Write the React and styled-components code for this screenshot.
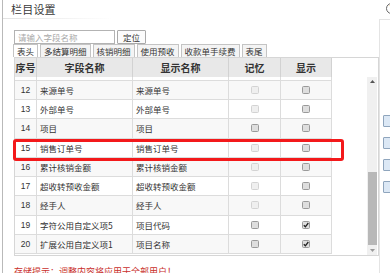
import React, { useLayoutEffect, useRef } from "react";
import styled, { createGlobalStyle } from "styled-components";

const Global = createGlobalStyle`
  html, body { margin: 0; padding: 0; background: #fff; overflow: hidden; }
  body { font-family: "Noto Sans CJK SC", "Noto Sans", sans-serif; color: #333; }
`;

const ROW_H = 19.25;
const VISIBLE_H = 177;

const rows = [
  { no: 1, field: "单据日期", label: "单据日期", memo: 0, show: 2 },
  { no: 2, field: "单据编号", label: "单据编号", memo: 0, show: 2 },
  { no: 3, field: "客户", label: "客户", memo: 1, show: 2 },
  { no: 4, field: "部门", label: "部门", memo: 1, show: 2 },
  { no: 5, field: "业务员", label: "业务员", memo: 1, show: 2 },
  { no: 6, field: "币种", label: "币种", memo: 0, show: 2 },
  { no: 7, field: "汇率", label: "汇率", memo: 0, show: 2 },
  { no: 8, field: "结算方式", label: "结算方式", memo: 1, show: 2 },
  { no: 9, field: "收款金额", label: "收款金额", memo: 0, show: 2 },
  { no: 10, field: "本币金额", label: "本币金额", memo: 0, show: 2 },
  { no: 11, field: "备注", label: "备注", memo: 0, show: 1 },
  { no: 12, field: "来源单号", label: "来源单号", memo: 0, show: 1 },
  { no: 13, field: "外部单号", label: "外部单号", memo: 0, show: 1 },
  { no: 14, field: "项目", label: "项目", memo: 1, show: 1 },
  { no: 15, field: "销售订单号", label: "销售订单号", memo: 0, show: 1 },
  { no: 16, field: "累计核销金额", label: "累计核销金额", memo: 0, show: 1 },
  { no: 17, field: "超收转预收金额", label: "超收转预收金额", memo: 0, show: 1 },
  { no: 18, field: "经手人", label: "经手人", memo: 0, show: 1 },
  { no: 19, field: "字符公用自定义项5", label: "项目代码", memo: 1, show: 2 },
  { no: 20, field: "扩展公用自定义项1", label: "项目名称", memo: 1, show: 2 },
];

const tabs = ["表头", "多结算明细", "核销明细", "使用预收", "收款单手续费", "表尾"];

const Page = styled.div`
  position: relative;
  width: 390px;
  height: 273px;
  overflow: clip;
`;

const Dialog = styled.div`
  margin-left: 2px;
  height: 273px;
  border-left: 1px solid #b9b9b9;
  display: flex;
  flex-direction: column;
`;

const TitleBar = styled.div`
  height: 19px;
  flex-shrink: 0;
  display: flex;
  align-items: center;
  justify-content: space-between;
  padding-left: 8px;
  position: relative;
  &::after {
    content: "";
    position: absolute;
    left: 0;
    bottom: 0;
    width: 110px;
    height: 1px;
    background: linear-gradient(to right, #e2e2e2, rgba(226,226,226,0));
  }
`;

const Title = styled.div`
  font-size: 11px;
  line-height: 11px;
  color: #3a3a3a;
  letter-spacing: 0.2px;
`;

const Help = styled.div`
  width: 9px;
  height: 9px;
  border: 1px solid #666;
  border-radius: 50%;
  font-size: 7px;
  line-height: 9px;
  text-align: center;
  color: #555;
  margin-right: -7px;
  margin-top: -2px;
  font-family: "DejaVu Sans", sans-serif;
  font-weight: bold;
`;

const Content = styled.div`
  flex: 1;
  min-height: 0;
  display: flex;
`;

const Main = styled.div`
  width: 378px;
  padding: 11px 0 0 11px;
  box-sizing: border-box;
  display: flex;
  flex-direction: column;
  overflow: clip;
`;

const Side = styled.div`
  flex: 1;
  border-left: 1px solid #e4e4e4;
  border-top: 1px solid #e4e4e4;
  padding: 95px 0 0 3px;
  display: flex;
  flex-direction: column;
  gap: 10px;
`;

const SideBox = styled.div`
  width: 12px;
  height: 10px;
  flex-shrink: 0;
  border: 1px solid #8fa5bd;
  background: #dce8f5;
  border-radius: 1px;
`;

const Toolbar = styled.div`
  display: flex;
  gap: 2px;
  height: 14px;
  flex-shrink: 0;
`;

const SearchInput = styled.div`
  width: 101px;
  box-sizing: border-box;
  border: 1px solid #b3b3b3;
  font-size: 8.5px;
  line-height: 12px;
  color: #a9a9a9;
  padding-left: 3px;
  background: #fff;
`;

const LocateBtn = styled.div`
  width: 29px;
  box-sizing: border-box;
  border: 1px solid #a9a9a9;
  border-radius: 1px;
  font-size: 8.5px;
  line-height: 12px;
  text-align: center;
  color: #333;
  background: #fbfbfb;
`;

const Tabs = styled.div`
  display: flex;
  gap: 2px;
  height: 13px;
  flex-shrink: 0;
  margin-left: -1px;
`;

const Tab = styled.div`
  box-sizing: border-box;
  border: 1px solid #c4c4c4;
  border-bottom: none;
  padding: 0 3px;
  font-size: 8.5px;
  line-height: 12px;
  color: #333;
  background: ${(p) => (p.$active ? "#fff" : "#f4f4f4")};
`;

const TableBox = styled.div`
  width: 365px;
  height: 199px;
  flex-shrink: 0;
  box-sizing: border-box;
  border: 1px solid #d6d6d6;
  display: flex;
  flex-direction: column;
`;

const HeaderRow = styled.div`
  display: grid;
  grid-template-columns: 22px 96px 96px 52px 51px;
  width: 317px;
  height: 19px;
  background: #e8e8e8;
  flex-shrink: 0;
`;

const HeadCell = styled.div`
  border-right: 1px solid #d2d2d2;
  font-size: 10px;
  font-weight: bold;
  line-height: 19px;
  text-align: center;
  color: #333;
  white-space: nowrap;
  overflow: hidden;
`;

const BodyWrap = styled.div`
  flex: 1;
  display: flex;
  min-height: 0;
`;

const Viewport = styled.div`
  flex: 1;
  height: ${VISIBLE_H}px;
  overflow: hidden;
`;

const Row = styled.div`
  display: grid;
  grid-template-columns: 22px 96px 96px 52px 51px;
  width: 317px;
  height: ${ROW_H}px;
  box-sizing: border-box;
  border-bottom: 1px solid #dcdcdc;
  background: ${(p) => (p.$alt ? "#f8f8f8" : "#fff")};
`;

const Cell = styled.div`
  border-right: 1px solid #dcdcdc;
  font-size: 8.5px;
  color: #333;
  display: flex;
  align-items: center;
  justify-content: ${(p) => (p.$align === "center" ? "center" : "flex-start")};
  padding-left: ${(p) => (p.$align === "center" ? 0 : 3)}px;
  white-space: nowrap;
  overflow: hidden;
  font-family: ${(p) => (p.$num ? '"Liberation Sans", Arial, sans-serif' : 'inherit')};
`;

const Check = styled.div`
  width: 8px;
  height: 8px;
  box-sizing: border-box;
  border-radius: 1.5px;
  border: 1px solid ${(p) => (p.$level === 0 ? "#d3d3d3" : "#9a9a9a")};
  background: ${(p) => (p.$level === 0 ? "#efefef" : "#dedede")};
  display: flex;
  align-items: center;
  justify-content: center;
`;

const Scrollbar = styled.div`
  width: 10px;
  margin-right: 1px;
  background: #f0f0f0;
  display: flex;
  flex-direction: column;
`;

const ArrowBtn = styled.div`
  height: 9px;
  display: flex;
  align-items: center;
  justify-content: center;
`;

const Track = styled.div`
  flex: 1;
  display: flex;
  flex-direction: column;
  justify-content: flex-end;
  padding-bottom: 1px;
`;

const Thumb = styled.div`
  width: 9px;
  margin-left: 1px;
  background: #b8b8b8;
`;

const Hint = styled.div`
  margin-top: 10px;
  flex-shrink: 0;
  font-size: 9px;
  line-height: 11px;
  color: #c9302c;
  white-space: nowrap;
`;

const Highlight = styled.div`
  position: absolute;
  left: 13px;
  top: 139px;
  width: 331px;
  height: 22px;
  box-sizing: border-box;
  border: 3px solid #f3191b;
  border-radius: 3px;
  pointer-events: none;
`;

function CheckBox({ level }) {
  return (
    <Check $level={level === 2 ? 1 : level}>
      {level === 2 && (
        <svg width="6" height="6" viewBox="0 0 6 6">
          <path d="M0.8 3.2 L2.4 4.8 L5.3 1" stroke="#222" strokeWidth="1.3" fill="none" />
        </svg>
      )}
    </Check>
  );
}

function Arrow({ up }) {
  return (
    <svg width="5" height="3" viewBox="0 0 5 3">
      <path d={up ? "M0 3 L2.5 0 L5 3 Z" : "M0 0 L2.5 3 L5 0 Z"} fill={up ? "#555" : "#999"} />
    </svg>
  );
}

export default function App() {
  const vp = useRef(null);
  useLayoutEffect(() => {
    if (vp.current) vp.current.scrollTop = vp.current.scrollHeight;
  }, []);
  const total = rows.length * ROW_H;
  const trackLen = VISIBLE_H - 18 - 1;
  const thumbLen = Math.round((VISIBLE_H / total) * trackLen);

  return (
    <Page>
      <Global />
      <Dialog>
        <TitleBar>
          <Title>栏目设置</Title>
          <Help>?</Help>
        </TitleBar>
        <Content>
          <Main>
            <Toolbar>
              <SearchInput>请输入字段名称</SearchInput>
              <LocateBtn>定位</LocateBtn>
            </Toolbar>
            <Tabs>
              {tabs.map((t, i) => (
                <Tab key={t} $active={i === 0}>{t}</Tab>
              ))}
            </Tabs>
            <TableBox>
              <HeaderRow>
                <HeadCell>序号</HeadCell>
                <HeadCell>字段名称</HeadCell>
                <HeadCell>显示名称</HeadCell>
                <HeadCell>记忆</HeadCell>
                <HeadCell>显示</HeadCell>
              </HeaderRow>
              <BodyWrap>
                <Viewport ref={vp}>
                  {rows.map((r) => (
                    <Row key={r.no} $alt={r.no % 2 === 0}>
                      <Cell $align="center" $num>{r.no}</Cell>
                      <Cell>{r.field}</Cell>
                      <Cell>{r.label}</Cell>
                      <Cell $align="center"><CheckBox level={r.memo} /></Cell>
                      <Cell $align="center"><CheckBox level={r.show} /></Cell>
                    </Row>
                  ))}
                </Viewport>
                <Scrollbar>
                  <ArrowBtn><Arrow up /></ArrowBtn>
                  <Track>
                    <Thumb style={{ height: thumbLen }} />
                  </Track>
                  <ArrowBtn><Arrow /></ArrowBtn>
                </Scrollbar>
              </BodyWrap>
            </TableBox>
            <Hint>存储提示：调整内容将应用于全部用户！</Hint>
          </Main>
          <Side>
            <SideBox />
            <SideBox />
            <SideBox />
            <SideBox />
          </Side>
        </Content>
      </Dialog>
      <Highlight />
    </Page>
  );
}
